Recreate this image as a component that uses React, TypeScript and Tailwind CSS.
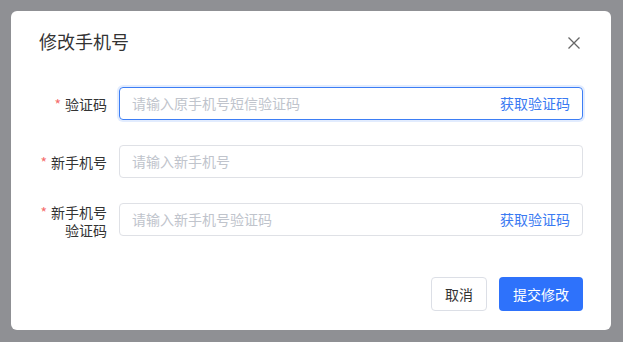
import React from "react";

const font = { fontFamily: '"Noto Sans CJK SC", "Noto Sans", sans-serif' };

function Label({ text }: { text: string }) {
  return (
    <div className="w-[68px] shrink-0 min-h-[33px] flex items-center justify-end text-right text-[14px] leading-[18px] text-[#333]">
      <div>
        <span className="text-[#f56c6c] mr-1">*</span>
        {text}
      </div>
    </div>
  );
}

function Field({ placeholder, action, focused }: { placeholder: string; action?: string; focused?: boolean }) {
  return (
    <div
      className={
        "flex-1 h-[33px] rounded-[4px] border flex items-center px-3 text-[14px] " +
        (focused ? "border-[#3d7ef5] shadow-[0_0_0_2px_rgba(61,126,245,0.15)]" : "border-[#dfe1e6]")
      }
    >
      <input
        className="flex-1 min-w-0 outline-none bg-transparent text-[#333] placeholder:text-[#c0c4cc]"
        placeholder={placeholder}
        style={font}
      />
      {action && <span className="text-[#3a7af2] cursor-pointer">{action}</span>}
    </div>
  );
}

export default function App() {
  return (
    <div className="w-[623px] h-[342px] bg-[#8f9094] pt-[11px] pl-[11px]" style={font}>
      <div className="w-[600px] h-[319px] bg-white rounded-md px-[28px] flex flex-col">
        <div className="flex items-start justify-between pt-[18px]">
          <div className="text-[18px] leading-[24px] text-[#333]">修改手机号</div>
          <svg className="mt-[8px] mr-[3px]" width="12" height="12" viewBox="0 0 12 12">
            <path d="M0.5 0.5 L11.5 11.5 M11.5 0.5 L0.5 11.5" stroke="#666" strokeWidth="1.3" fill="none" />
          </svg>
        </div>
        <div className="mt-[34px] flex flex-col gap-[25px]">
          <div className="flex items-start gap-3">
            <Label text="验证码" />
            <Field placeholder="请输入原手机号短信验证码" action="获取验证码" focused />
          </div>
          <div className="flex items-start gap-3">
            <Label text="新手机号" />
            <Field placeholder="请输入新手机号" />
          </div>
          <div className="flex items-start gap-3">
            <Label text="新手机号验证码" />
            <Field placeholder="请输入新手机号验证码" action="获取验证码" />
          </div>
        </div>
        <div className="mt-[38px] flex justify-end gap-3">
          <button className="w-[56px] h-[34px] rounded-[4px] border border-[#dcdfe6] text-[14px] text-[#333] bg-white">取消</button>
          <button className="w-[84px] h-[34px] rounded-[4px] bg-[#2e72fb] text-[14px] text-white">提交修改</button>
        </div>
      </div>
    </div>
  );
}
